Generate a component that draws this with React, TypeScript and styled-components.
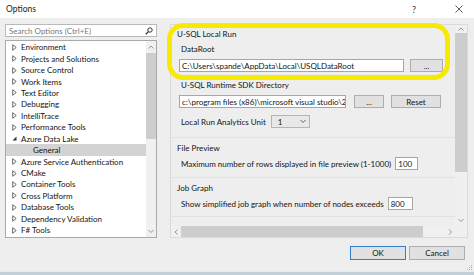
import React from "react";
import styled, { createGlobalStyle } from "styled-components";

const Global = createGlobalStyle`
  html, body { margin: 0; padding: 0; background: #eeeeee; }
  body { font-family: Lato, "Liberation Sans", sans-serif; }
`;

const Window = styled.div`
  position: relative;
  width: 474px;
  height: 275px;
  background: #eeeeee;
  display: flex;
  flex-direction: column;
  overflow: hidden;
  font-size: 8px;
  color: #141414;
`;

const TitleBar = styled.div`
  height: 18px;
  flex: none;
  background: #ffffff;
  display: flex;
  align-items: center;
  padding-left: 6px;
  font-size: 8.5px;
  color: #222;
`;

const Title = styled.span`
  flex: 1;
`;

const TitleButton = styled.span<{ $w: number }>`
  width: ${(p) => p.$w}px;
  display: flex;
  justify-content: center;
  align-items: center;
  color: #333;
  font-size: 9px;
`;

const Main = styled.div`
  height: 220px;
  flex: none;
  box-sizing: border-box;
  padding: 6px 0 0 5px;
  display: flex;
  gap: 13px;
`;

const LeftColumn = styled.div`
  width: 152px;
  display: flex;
  flex-direction: column;
  gap: 3px;
`;

const SearchBox = styled.div`
  height: 13px;
  box-sizing: border-box;
  border: 1px solid #b9b9b9;
  background: #fff;
  display: flex;
  align-items: center;
  padding: 0 3px 0 3px;
  color: #7a7a7a;
`;

const SearchText = styled.span`
  flex: 1;
`;

const Tree = styled.div`
  height: 198px;
  box-sizing: border-box;
  border: 1px solid #a9a9a9;
  background: #fff;
  display: flex;
`;

const TreeList = styled.div`
  flex: 1;
  overflow: hidden;
  padding-top: 0.5px;
`;

const TreeRow = styled.div<{ $selected?: boolean; $indent: number }>`
  height: 11.45px;
  display: flex;
  align-items: center;
  white-space: nowrap;
  padding-left: ${(p) => p.$indent}px;
  background: ${(p) => (p.$selected ? "#d3d3d3" : "transparent")};
`;

const Expander = styled.span`
  width: 9px;
  display: inline-flex;
  align-items: center;
`;

const VScroll = styled.div<{ $w: number }>`
  width: ${(p) => p.$w}px;
  background: #f0f0f0;
  display: flex;
  flex-direction: column;
  align-items: center;
`;

const ScrollArrow = styled.div<{ $h: number }>`
  height: ${(p) => p.$h}px;
  width: 100%;
  flex: none;
  display: flex;
  align-items: center;
  justify-content: center;
`;

const VThumb = styled.div<{ $h: number }>`
  height: ${(p) => p.$h}px;
  width: 100%;
  flex: none;
  background: #cdcdcd;
`;

const Spacer = styled.div`
  flex: 1;
`;

const Panel = styled.div`
  width: 298px;
  height: 214px;
  box-sizing: border-box;
  border: 1px solid #dadada;
  display: grid;
  grid-template-columns: 1fr 12px;
  grid-template-rows: 1fr 11px;
`;

const PanelContent = styled.div`
  overflow: hidden;
  display: flex;
  flex-direction: column;
`;

const Section = styled.div<{ $pt: number; $pb: number; $line?: boolean }>`
  padding: ${(p) => p.$pt}px 0 ${(p) => p.$pb}px 6px;
  border-bottom: ${(p) => (p.$line ? "1px solid #e2e2e2" : "none")};
  display: flex;
  flex-direction: column;
`;

const GroupHeader = styled.div`
  height: 12px;
  line-height: 12px;
  white-space: nowrap;
`;

const Label = styled.div<{ $mt: number }>`
  height: 12px;
  line-height: 12px;
  margin-top: ${(p) => p.$mt}px;
  padding-left: 4px;
  white-space: nowrap;
`;

const Row = styled.div<{ $mt: number }>`
  height: 13px;
  margin-top: ${(p) => p.$mt}px;
  display: flex;
  align-items: center;
  padding-left: 2px;
  white-space: nowrap;
`;

const RowLabel = styled.span`
  padding-left: 2px;
`;

const TextField = styled.div<{ $w: number; $ml?: number }>`
  width: ${(p) => p.$w}px;
  height: 13px;
  margin-left: ${(p) => p.$ml ?? 0}px;
  box-sizing: border-box;
  border: 1px solid #a6a6a6;
  background: #fff;
  padding-left: 2px;
  display: flex;
  align-items: center;
  overflow: hidden;
  white-space: nowrap;
  flex: none;
`;

const SmallButton = styled.div<{ $w: number; $ml: number }>`
  width: ${(p) => p.$w}px;
  height: 13px;
  margin-left: ${(p) => p.$ml}px;
  box-sizing: border-box;
  border: 1px solid #adadad;
  background: #e1e1e1;
  display: flex;
  align-items: center;
  justify-content: center;
  flex: none;
`;

const Dropdown = styled.div`
  width: 39px;
  height: 13px;
  margin-left: 5px;
  box-sizing: border-box;
  border: 1px solid #b5b5b5;
  background: #e8e8e8;
  display: flex;
  align-items: center;
  padding: 0 3px 0 6px;
`;

const DropValue = styled.span`
  flex: 1;
`;

const HScroll = styled.div`
  background: #f0f0f0;
  display: flex;
  align-items: center;
`;

const HThumb = styled.div`
  width: 242px;
  height: 100%;
  background: #cdcdcd;
`;

const HArrow = styled.div`
  width: 10px;
  height: 100%;
  display: flex;
  align-items: center;
  justify-content: center;
`;

const Corner = styled.div`
  background: #f0f0f0;
`;

const Footer = styled.div`
  flex: 1;
  display: flex;
  justify-content: flex-end;
  align-items: flex-start;
  padding: 8px 9px 0 0;
  gap: 3px;
`;

const DialogButton = styled.div<{ $default?: boolean }>`
  width: 56px;
  height: 14px;
  box-sizing: border-box;
  border: ${(p) => (p.$default ? "1.5px solid #2f7fc9" : "1px solid #adadad")};
  background: #e1e1e1;
  display: flex;
  align-items: center;
  justify-content: center;
  font-size: 8px;
`;

const BottomStripe = styled.div`
  height: 3px;
  flex: none;
  background: #c3cfd8;
  border-top: 1px solid #e4ecf1;
`;

const Highlight = styled.div`
  position: absolute;
  left: 167px;
  top: 23px;
  width: 283px;
  height: 57px;
  box-sizing: border-box;
  border: 5px solid #f6ea00;
  border-radius: 16px;
  pointer-events: none;
`;

const Grip = styled.svg`
  position: absolute;
  right: 2px;
  bottom: 5px;
`;

const Collapsed = () => (
  <svg width="5" height="7" viewBox="0 0 5 7">
    <polygon points="0.7,0.7 4.2,3.5 0.7,6.3" fill="none" stroke="#5a5a5a" strokeWidth="0.9" />
  </svg>
);

const Expanded = () => (
  <svg width="5" height="5" viewBox="0 0 5 5">
    <polygon points="4.5,0.5 4.5,4.5 0.5,4.5" fill="#333" />
  </svg>
);

const Chevron = ({ dir, color = "#8a8a8a" }: { dir: "up" | "down" | "left" | "right"; color?: string }) => {
  const pts: Record<string, string> = {
    up: "0.5,3.5 3,1 5.5,3.5",
    down: "0.5,1 3,3.5 5.5,1",
    left: "3.5,0.5 1,3 3.5,5.5",
    right: "1,0.5 3.5,3 1,5.5",
  };
  const vertical = dir === "up" || dir === "down";
  return (
    <svg width={vertical ? 6 : 5} height={vertical ? 5 : 6} viewBox={vertical ? "0 0 6 5" : "0 0 5 6"}>
      <polyline points={pts[dir]} fill="none" stroke={color} strokeWidth="0.9" />
    </svg>
  );
};

const treeItems: { label: string; expanded?: boolean; child?: boolean; selected?: boolean }[] = [
  { label: "Environment" },
  { label: "Projects and Solutions" },
  { label: "Source Control" },
  { label: "Work Items" },
  { label: "Text Editor" },
  { label: "Debugging" },
  { label: "IntelliTrace" },
  { label: "Performance Tools" },
  { label: "Azure Data Lake", expanded: true },
  { label: "General", child: true, selected: true },
  { label: "Azure Service Authentication" },
  { label: "CMake" },
  { label: "Container Tools" },
  { label: "Cross Platform" },
  { label: "Database Tools" },
  { label: "Dependency Validation" },
  { label: "F# Tools" },
  { label: "Graphics Diagnostics" },
];

export default function App() {
  return (
    <Window>
      <Global />
      <TitleBar>
        <Title>Options</Title>
        <TitleButton $w={30}>?</TitleButton>
        <TitleButton $w={15} />
        <TitleButton $w={30}>
          <svg width="8" height="8" viewBox="0 0 8 8">
            <path d="M0.5 0.5 L7.5 7.5 M7.5 0.5 L0.5 7.5" stroke="#333" strokeWidth="0.8" />
          </svg>
        </TitleButton>
      </TitleBar>
      <Main>
        <LeftColumn>
          <SearchBox>
            <SearchText>Search Options (Ctrl+E)</SearchText>
            <svg width="8" height="8" viewBox="0 0 8 8">
              <circle cx="5" cy="3" r="2.2" fill="none" stroke="#333" strokeWidth="1" />
              <path d="M3.4 4.6 L0.8 7.2" stroke="#333" strokeWidth="1.3" />
            </svg>
          </SearchBox>
          <Tree>
            <TreeList>
              {treeItems.map((it) => (
                <TreeRow key={it.label} $selected={it.selected} $indent={it.child ? 27 : 6}>
                  {!it.child && <Expander>{it.expanded ? <Expanded /> : <Collapsed />}</Expander>}
                  {it.label}
                </TreeRow>
              ))}
            </TreeList>
            <VScroll $w={10}>
              <ScrollArrow $h={12}>
                <Chevron dir="up" />
              </ScrollArrow>
              <VThumb $h={86} />
              <Spacer />
              <ScrollArrow $h={12}>
                <Chevron dir="down" />
              </ScrollArrow>
            </VScroll>
          </Tree>
        </LeftColumn>
        <Panel>
          <PanelContent>
            <Section $pt={3} $pb={9} $line>
              <GroupHeader>U-SQL Local Run</GroupHeader>
              <Label $mt={3}>DataRoot</Label>
              <Row $mt={4}>
                <TextField $w={225}>C:\Users\spande\AppData\Local\USQLDataRoot</TextField>
                <SmallButton $w={33} $ml={6}>...</SmallButton>
              </Row>
              <Label $mt={7}>U-SQL Runtime SDK Directory</Label>
              <Row $mt={4}>
                <TextField $w={167}>c:\program files (x86)\microsoft visual studio\2017</TextField>
                <SmallButton $w={30} $ml={8}>...</SmallButton>
                <SmallButton $w={50} $ml={7}>Reset</SmallButton>
              </Row>
              <Row $mt={7}>
                <RowLabel>Local Run Analytics Unit</RowLabel>
                <Dropdown>
                  <DropValue>1</DropValue>
                  <Chevron dir="down" color="#555" />
                </Dropdown>
              </Row>
            </Section>
            <Section $pt={4} $pb={7} $line>
              <GroupHeader>File Preview</GroupHeader>
              <Row $mt={3}>
                <RowLabel>Maximum number of rows displayed in file preview (1-1000)</RowLabel>
                <TextField $w={23} $ml={4}>100</TextField>
              </Row>
            </Section>
            <Section $pt={4} $pb={6} $line>
              <GroupHeader>Job Graph</GroupHeader>
              <Row $mt={3}>
                <RowLabel>Show simplified job graph when number of nodes exceeds</RowLabel>
                <TextField $w={25} $ml={4}>800</TextField>
              </Row>
            </Section>
          </PanelContent>
          <VScroll $w={12}>
            <ScrollArrow $h={8}>
              <Chevron dir="up" />
            </ScrollArrow>
            <VThumb $h={139} />
            <Spacer />
            <ScrollArrow $h={12}>
              <Chevron dir="down" />
            </ScrollArrow>
          </VScroll>
          <HScroll>
            <HArrow>
              <Chevron dir="left" />
            </HArrow>
            <HThumb />
            <Spacer />
            <HArrow>
              <Chevron dir="right" />
            </HArrow>
          </HScroll>
          <Corner />
        </Panel>
      </Main>
      <Footer>
        <DialogButton $default>OK</DialogButton>
        <DialogButton>Cancel</DialogButton>
      </Footer>
      <BottomStripe />
      <Highlight />
      <Grip width="5" height="5" viewBox="0 0 5 5">
        <rect x="4" y="0" width="1" height="1" fill="#b0b0b0" />
        <rect x="2" y="2" width="1" height="1" fill="#b0b0b0" />
        <rect x="4" y="2" width="1" height="1" fill="#b0b0b0" />
        <rect x="0" y="4" width="1" height="1" fill="#b0b0b0" />
        <rect x="2" y="4" width="1" height="1" fill="#b0b0b0" />
        <rect x="4" y="4" width="1" height="1" fill="#b0b0b0" />
      </Grip>
    </Window>
  );
}
